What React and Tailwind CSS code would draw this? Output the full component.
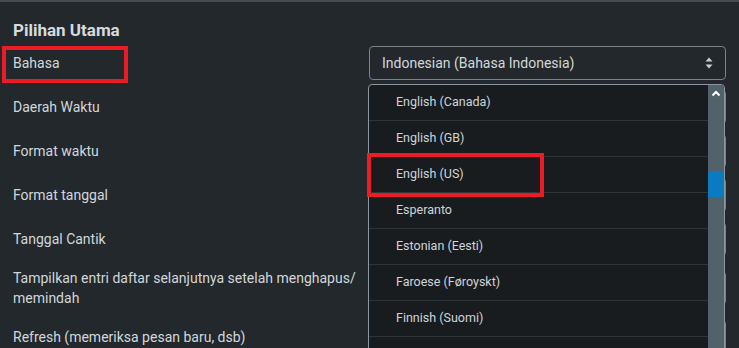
import React from 'react';

const rows = [
  { label: 'Bahasa', value: 'Indonesian (Bahasa Indonesia)' },
  { label: 'Daerah Waktu' },
  { label: 'Format waktu' },
  { label: 'Format tanggal' },
  { label: 'Tanggal Cantik' },
  { label: 'Tampilkan entri daftar selanjutnya setelah menghapus/ memindah', tall: true },
  { label: 'Refresh (memeriksa pesan baru, dsb)' },
];

const languages = [
  'English (Canada)',
  'English (GB)',
  'English (US)',
  'Esperanto',
  'Estonian (Eesti)',
  'Faroese (Føroyskt)',
  'Finnish (Suomi)',
];

function SortArrows() {
  return (
    <svg width="8" height="12" viewBox="0 0 8 12" className="shrink-0">
      <path d="M4 0.5 L7.5 4.5 H0.5 Z" fill="#c9ced3" />
      <path d="M4 11.5 L7.5 7.5 H0.5 Z" fill="#c9ced3" />
    </svg>
  );
}

export default function App() {
  return (
    <div className="relative h-[348px] w-[739px] overflow-hidden border-t-2 border-[#454c51] bg-[#22282c] font-['Roboto',sans-serif] text-[#d2d7db]">
      <h2 className="h-[39px] px-[13px] pt-[18px] text-[17px] font-bold leading-5 text-[#d6dbdf]">Pilihan Utama</h2>

      <div className="flex flex-col">
        {rows.map((row) => (
          <div
            key={row.label}
            className={`grid grid-cols-[369px_357px] items-center ${row.tall ? 'h-[54px]' : 'h-[44px]'}`}
          >
            <div className="pl-[13px] text-[14px] leading-5">{row.label}</div>
            <div className="flex h-[34px] items-center justify-between rounded-[4px] border border-[#78838c] px-[12px] text-[14px]">
              <span>{row.value}</span>
              <SortArrows />
            </div>
          </div>
        ))}
      </div>

      {/* open dropdown */}
      <div className="absolute left-[368px] top-[82px] flex h-[300px] w-[357px] overflow-hidden rounded-t-[4px] border border-[#8b969e] bg-[#181c1f]">
        <ul className="flex-1">
          {languages.map((lang) => (
            <li
              key={lang}
              className="flex h-[36px] items-center border-b border-[#2e3539] pl-[27px] text-[12.5px] text-[#d0d5d9]"
            >
              {lang}
            </li>
          ))}
        </ul>
        <div className="flex w-[16px] flex-col items-center rounded-tr-[3px] bg-[#52626a]">
          <svg width="10" height="7" viewBox="0 0 10 7" className="mt-[5px]">
            <path d="M1.5 5.5 L5 2 L8.5 5.5" fill="none" stroke="#ffffff" strokeWidth="2" />
          </svg>
          <div className="mt-[74px] h-[26px] w-full bg-[#0a7bc0]" />
        </div>
      </div>

      {/* annotation boxes */}
      <div className="absolute left-[2px] top-[44px] h-[37px] w-[126px] border-4 border-[#ed1c24]" />
      <div className="absolute left-[367px] top-[151px] h-[44px] w-[177px] border-4 border-[#ed1c24]" />
    </div>
  );
}
